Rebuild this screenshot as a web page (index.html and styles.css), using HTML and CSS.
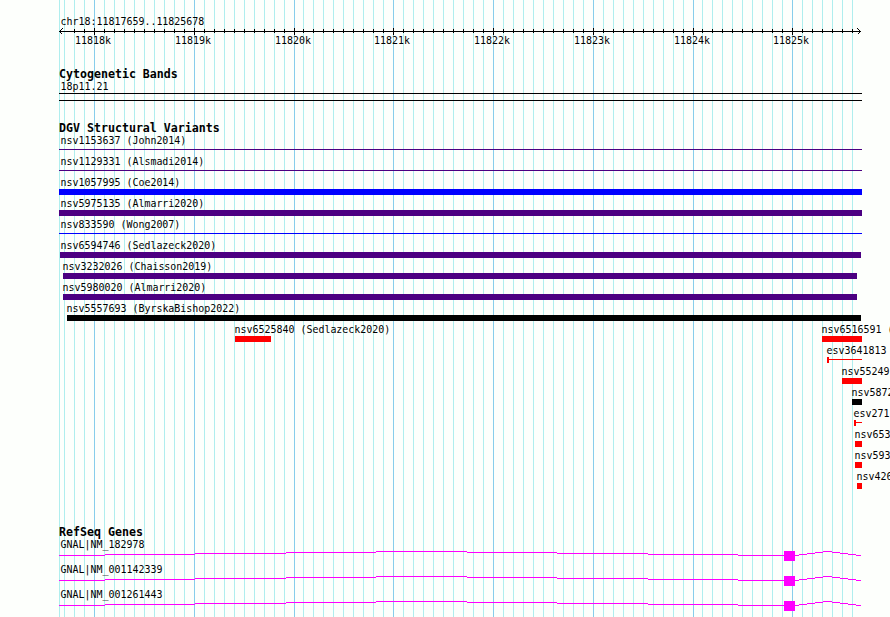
FILE: index.html
```html
<!DOCTYPE html>
<html lang="en">
<head>
    <meta charset="UTF-8">
    <meta name="viewport" content="width=device-width, initial-scale=1.0">
    <title>chr18:11817659..11825678</title>
    <link rel="stylesheet" href="styles.css">
</head>
<body>
    <div class="browser">
        <svg class="gridlines" width="890" height="617">
            <path id="gridMinor" class="grid-minor" />
            <path id="gridMajor" class="grid-major" />
        </svg>

        <div class="tracks">
            <div class="ruler">
                <div class="label region">chr18:11817659..11825678</div>
                <svg class="scale" width="831" height="28">
                    <path class="axis" d="M0 6.5H802M3.5 3.5L0.5 6.5L3.5 9.5M798.5 3.5L801.5 6.5L798.5 9.5" />
                    <path id="ticks" class="axis" />
                    <g id="tickLabels"></g>
                </svg>
            </div>

            <div class="track">
                <h2>Cytogenetic Bands</h2>
                <div class="label">18p11.21</div>
                <div class="band"></div>
            </div>

            <div class="track variants">
                <h2>DGV Structural Variants</h2>
                <div class="row"><div class="feature full"><div class="label">nsv1153637 (John2014)</div><div class="line purple"></div></div></div>
                <div class="row"><div class="feature full"><div class="label">nsv1129331 (Alsmadi2014)</div><div class="line purple"></div></div></div>
                <div class="row"><div class="feature full"><div class="label">nsv1057995 (Coe2014)</div><div class="bar blue"></div></div></div>
                <div class="row"><div class="feature full"><div class="label">nsv5975135 (Almarri2020)</div><div class="bar purple"></div></div></div>
                <div class="row"><div class="feature full"><div class="label">nsv833590 (Wong2007)</div><div class="line blue"></div></div></div>
                <div class="row"><div class="feature" style="margin-left: 1px; width: 801px"><div class="label flush">nsv6594746 (Sedlazeck2020)</div><div class="bar purple"></div></div></div>
                <div class="row"><div class="feature" style="margin-left: 4px; width: 794px"><div class="label">nsv3232026 (Chaisson2019)</div><div class="bar purple"></div></div></div>
                <div class="row"><div class="feature" style="margin-left: 4px; width: 794px"><div class="label">nsv5980020 (Almarri2020)</div><div class="bar purple"></div></div></div>
                <div class="row"><div class="feature" style="margin-left: 8px; width: 794px"><div class="label">nsv5557693 (ByrskaBishop2022)</div><div class="bar black"></div></div></div>
                <div class="row">
                    <div class="feature" style="margin-left: 176px; width: 36px"><div class="label">nsv6525840 (Sedlazeck2020)</div><div class="bar red"></div></div>
                    <div class="feature" style="margin-left: 551px; width: 40px"><div class="label">nsv6516591 (</div><div class="bar red"></div></div>
                </div>
                <div class="row"><div class="feature" style="margin-left: 768px; width: 35px"><div class="label">esv3641813</div><div class="line capped red"></div></div></div>
                <div class="row"><div class="feature" style="margin-left: 783px; width: 20px"><div class="label">nsv55249</div><div class="bar red"></div></div></div>
                <div class="row"><div class="feature" style="margin-left: 793px; width: 10px"><div class="label">nsv5872</div><div class="bar black"></div></div></div>
                <div class="row"><div class="feature" style="margin-left: 795px; width: 8px"><div class="label">esv271</div><div class="line capped red"></div></div></div>
                <div class="row"><div class="feature" style="margin-left: 796px; width: 7px"><div class="label">nsv653</div><div class="bar red"></div></div></div>
                <div class="row"><div class="feature" style="margin-left: 796px; width: 7px"><div class="label">nsv593</div><div class="bar red"></div></div></div>
                <div class="row"><div class="feature" style="margin-left: 798px; width: 5px"><div class="label">nsv426</div><div class="bar red"></div></div></div>
            </div>

            <div class="track genes">
                <h2>RefSeq Genes</h2>
                <div class="label">GNAL|NM_182978</div>
                <svg class="gene" width="803" height="10">
                    <g id="transcript">
                        <path d="M0 4.5H46M46 3.5H136M136 2.5H227M227 1.5H317M317 0.5H408M408 1.5H498M498 2.5H589M589 3.5H679M679 4.5H740M740 3.5H748M748 2.5H756M756 1.5H764M764 0.5H773M773 1.5H781M781 2.5H789M789 3.5H797M797 4.5H802" />
                        <rect x="725" y="0" width="11" height="10" />
                    </g>
                </svg>
                <div class="label">GNAL|NM_001142339</div>
                <svg class="gene" width="803" height="10"><use href="#transcript" /></svg>
                <div class="label">GNAL|NM_001261443</div>
                <svg class="gene" width="803" height="10"><use href="#transcript" /></svg>
            </div>
        </div>
    </div>

    <script>
        // One grid line every 100 bp, a major one every 1000 bp
        const LEFT = 59;
        let minor = `M${LEFT + 0.5} 0V617`;
        let major = '';
        let ticks = '';
        const tickLabels = document.getElementById('tickLabels');

        for (let i = 0; i < 80; i++) {
            const x = Math.floor(64.59 + 9.975 * i) + 0.5;
            const tickX = x - LEFT;
            if (i % 10 === 3) {
                major += `M${x} 0V617`;
                ticks += `M${tickX} 3V10`;
                const text = document.createElementNS('http://www.w3.org/2000/svg', 'text');
                text.setAttribute('x', tickX - 19.5);
                text.setAttribute('y', 19);
                text.textContent = `${11818 + (i - 3) / 10}k`;
                tickLabels.appendChild(text);
            } else {
                minor += `M${x} 0V617`;
                if (i > 0) ticks += `M${tickX} 4V8`;
            }
        }

        document.getElementById('gridMinor').setAttribute('d', minor);
        document.getElementById('gridMajor').setAttribute('d', major);
        document.getElementById('ticks').setAttribute('d', ticks);
    </script>
</body>
</html>
```
FILE: styles.css
```css
* {
    margin: 0;
    padding: 0;
    box-sizing: border-box;
}

body {
    background: #fdfffc;
    color: #000;
    font-family: 'DejaVu Sans Mono', 'Liberation Mono', monospace;
    font-size: 9.966px;
    overflow: hidden;
}

.browser {
    display: grid;
    width: 890px;
    height: 617px;
    overflow: hidden;
}

.gridlines, .tracks {
    grid-area: 1 / 1;
}

.tracks {
    padding-left: 59px;
    z-index: 1;
    min-width: 0;
}

svg {
    display: block;
    shape-rendering: crispEdges;
}

.grid-minor {
    stroke: #afeeee;
}

.grid-major {
    stroke: #87ceeb;
}

.ruler {
    height: 66px;
    padding-top: 13px;
}

.region {
    margin-bottom: -3px;
}

.axis {
    stroke: #000;
    fill: none;
}

h2 {
    height: 12px;
    line-height: 17px;
    font-size: 11.627px;
    font-weight: bold;
    white-space: nowrap;
}

.label {
    height: 15px;
    line-height: 17px;
    margin-left: 1px;
    text-indent: 0.5px;
    white-space: nowrap;
}

.band {
    width: 803px;
    height: 8px;
    border-top: 1px solid #000;
    border-bottom: 1px solid #000;
}

.variants {
    margin-top: 19px;
}

.row {
    display: flex;
    height: 21px;
}

.feature {
    flex: none;
}

.feature .label {
    margin-left: -1px;
}

.feature .flush {
    margin-left: 0;
}

.full {
    width: 803px;
}

.full .label {
    margin-left: 1px;
}

.bar {
    height: 6px;
    background: currentColor;
}

.line {
    height: 6px;
    background: linear-gradient(currentColor, currentColor) 0 2px / 100% 1px no-repeat;
}

.capped {
    border-left: 2px solid currentColor;
}

.purple {
    color: #4b0082;
}

.blue {
    color: #0000ff;
}

.red {
    color: #ff0000;
}

.black {
    color: #000;
}

.genes {
    margin-top: 35px;
}

.gene path, .gene use {
    stroke: #ff00ff;
}

.gene rect {
    fill: #ff00ff;
    stroke: none;
}
```
